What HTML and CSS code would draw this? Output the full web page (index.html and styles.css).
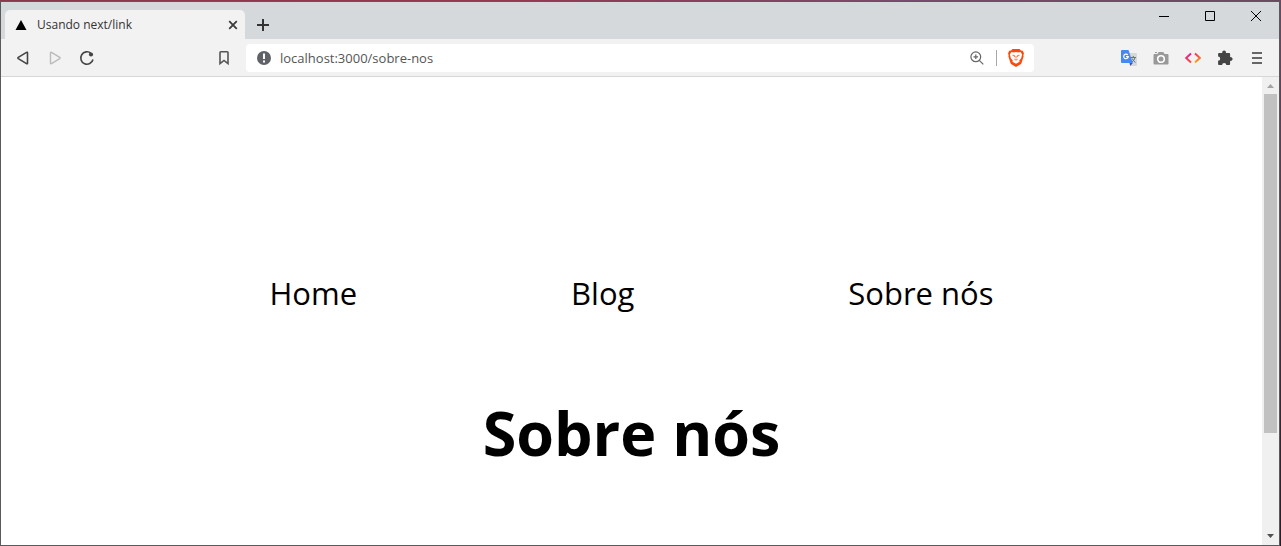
FILE: index.html
```html
<!DOCTYPE html>
<html lang="pt-BR">
<head>
    <meta charset="UTF-8">
    <meta name="viewport" content="width=device-width, initial-scale=1.0">
    <title>Usando next/link</title>
    <link rel="stylesheet" href="styles.css">
</head>
<body>
    <div class="window">
        <header class="titlebar">
            <div class="tab">
                <svg class="favicon" width="12" height="12" viewBox="0 0 12 12"><path d="M6 1l5.500 10h-11z" fill="#000"/></svg>
                <span class="tab-title">Usando next/link</span>
                <button class="tab-close" aria-label="Fechar aba">
                    <svg width="10" height="10" viewBox="0 0 10 10"><path d="M1.200 1.200l7.600 7.600M8.800 1.200l-7.600 7.600" stroke="#3c3c3c" stroke-width="1.800"/></svg>
                </button>
            </div>
            <button class="new-tab" aria-label="Nova aba">
                <svg width="12" height="12" viewBox="0 0 12 12"><path d="M6 0v12M0 6h12" stroke="#333" stroke-width="2"/></svg>
            </button>
            <div class="window-controls">
                <button aria-label="Minimizar"><svg width="10" height="10" viewBox="0 0 10 10"><path d="M0 5.500h10" stroke="#000"/></svg></button>
                <button aria-label="Maximizar"><svg width="10" height="10" viewBox="0 0 10 10"><path d="M.5 .5h9v9h-9z" fill="none" stroke="#000"/></svg></button>
                <button aria-label="Fechar"><svg width="10" height="10" viewBox="0 0 10 10"><path d="M0 0l10 10M10 0L0 10" stroke="#000"/></svg></button>
            </div>
        </header>

        <div class="toolbar">
            <div class="toolbar-side">
                <button class="tool" aria-label="Voltar">
                    <svg width="16" height="16" viewBox="0 0 16 16"><path d="M12.500 3v10q0 1.200-1 .6L3.300 8.600q-.8-.6 0-1.200l8.200-5q1-.6 1 .6z" fill="none" stroke="#444" stroke-width="1.600"/></svg>
                </button>
                <button class="tool" aria-label="Avançar" disabled>
                    <svg width="16" height="16" viewBox="0 0 16 16"><path d="M3.500 3v10q0 1.200 1 .6l8.200-5q.8-.6 0-1.200l-8.200-5q-1-.6-1 .6z" fill="none" stroke="#bbb" stroke-width="1.400"/></svg>
                </button>
                <button class="tool" aria-label="Recarregar">
                    <svg width="16" height="16" viewBox="0 0 16 16"><path d="M14 9.500A6.200 6.200 0 1 1 12 3.300" fill="none" stroke="#444" stroke-width="1.600"/><circle cx="12" cy="4.500" r="2.100" fill="#444"/></svg>
                </button>
                <button class="tool bookmark" aria-label="Favoritar">
                    <svg width="16" height="16" viewBox="0 0 16 16"><path d="M4 2.500q0-.8.800-.8h6.400q.8 0 .8.800v11.200L8 10.500l-4 3.200z" fill="none" stroke="#555" stroke-width="1.600"/></svg>
                </button>
            </div>

            <div class="address-bar">
                <svg width="14" height="14" viewBox="0 0 14 14"><circle cx="7" cy="7" r="7" fill="#5f6368"/><path d="M7 2.500v5.500M7 9.500v2" stroke="#fff" stroke-width="2"/></svg>
                <input type="text" class="address" aria-label="Endereço" value="localhost:3000/sobre-nos">
                <button class="zoom-button" aria-label="Zoom">
                    <svg width="14" height="14" viewBox="0 0 14 14"><circle cx="5.800" cy="5.800" r="4.900" fill="none" stroke="#666" stroke-width="1.200"/><path d="M9.300 9.300L13.300 13.300M5.800 3.500v4.600M3.500 5.800h4.600" stroke="#666" stroke-width="1.200"/></svg>
                </button>
                <span class="divider"></span>
                <button class="brave" aria-label="Brave Shields">
                    <svg width="16" height="18" viewBox="0 0 16 18">
                        <path d="M4.500 0h7l1.500 1.500 1.800.2 1.200 2.800-.6 1.500.2 1.500-2.100 6.500q-.4 1-1.300 1.600L8 18l-4.200-2.400q-.9-.6-1.300-1.600L.4 7.500.6 6 0 4.500l1.200-2.800 1.800-.2z" fill="#fb4a0c"/>
                        <path d="M3.500 3l2.500.6L8 3l2 .6 2.500-.6 1.600 2.200-.9 4-2 2.300.4 1.200L8 14.800l-3.600-2.100.4-1.200-2-2.300-.9-4z" fill="#fff"/>
                        <path d="M4.500 6.200l2 .4-.3 1.400M11.500 6.200l-2 .4.3 1.400M8 7v2.500M6.300 10.200l1.700.9 1.700-.9" fill="none" stroke="#fb5a24" stroke-width=".9"/>
                    </svg>
                </button>
            </div>

            <div class="toolbar-side extensions">
                <button class="tool" aria-label="Google Tradutor">
                    <svg width="16" height="16" viewBox="0 0 16 16">
                        <path d="M6 3h9q1 0 1 1v11q0 1-1 1H10z" fill="#d8d8d8"/>
                        <path d="M8.500 13h3.300l-2.600 3z" fill="#3d4db7"/>
                        <path d="M1 0h6.500l4.300 13H1q-1 0-1-1V1q0-1 1-1z" fill="#4688f1"/>
                        <path d="M6.800 5A2.300 2.300 0 1 0 7.300 6.600H5" fill="none" stroke="#fff" stroke-width="1.200"/>
                        <path d="M10 7.500h5M12.300 6v1.500M14 7.500q-.5 3-3 4.500M11.200 8.500q1 2.500 3.300 4" fill="none" stroke="#607988"/>
                    </svg>
                </button>
                <button class="tool" aria-label="Captura de tela">
                    <svg width="16" height="16" viewBox="0 0 16 16"><path d="M1.500 4h3L5.700 2h4.600l1.200 2h3q1 0 1 1v8.500q0 1-1 1h-13q-1 0-1-1V5q0-1 1-1z" fill="#999"/><circle cx="8" cy="9" r="3.300" fill="#999" stroke="#fff" stroke-width="1.600"/><path d="M2 2.500h2" stroke="#999"/></svg>
                </button>
                <button class="tool" aria-label="Código">
                    <svg width="16" height="16" viewBox="0 0 16 16">
                        <defs>
                            <linearGradient id="pink" x2="0" y2="1"><stop stop-color="#e5199a"/><stop offset="1" stop-color="#fb4b3d"/></linearGradient>
                            <linearGradient id="orange" x2="0" y2="1"><stop stop-color="#f8314e"/><stop offset="1" stop-color="#fba51a"/></linearGradient>
                        </defs>
                        <path d="M6 3.500L1.200 8 6 12.500" fill="none" stroke="url(#pink)" stroke-width="1.900"/>
                        <path d="M10 3.500L14.800 8 10 12.500" fill="none" stroke="url(#orange)" stroke-width="1.900"/>
                    </svg>
                </button>
                <button class="tool" aria-label="Extensões">
                    <svg width="16" height="16" viewBox="0 0 16 16"><path d="M2 3h3.300a1.900 1.900 0 1 1 3.600 0h3.300q.9 0 .9.900v3.300a1.900 1.900 0 1 1 0 3.600v3.300q0 .9-.9.900H9.300a2.100 2.100 0 1 0-4.200 0H2q-.9 0-.9-.9v-3.300a2.100 2.100 0 1 0 0-4.200V3.900q0-.9.900-.9z" fill="#444"/></svg>
                </button>
                <button class="tool" aria-label="Menu">
                    <svg width="16" height="16" viewBox="0 0 16 16"><path d="M3 3h10M3 8h10M3 13h10" stroke="#666" stroke-width="2"/></svg>
                </button>
            </div>
        </div>

        <div class="viewport">
            <main class="page">
                <nav class="menu">
                    <a href="#home">Home</a>
                    <a href="#blog">Blog</a>
                    <a href="#sobre-nos">Sobre nós</a>
                </nav>
                <h1>Sobre nós</h1>
            </main>
            <div class="scrollbar">
                <svg class="scroll-arrow" width="7" height="4" viewBox="0 0 7 4"><path d="M3.500 0L7 4H0z" fill="#a3a3a3"/></svg>
                <div class="scroll-track"><div class="scroll-thumb"></div></div>
                <svg class="scroll-arrow" width="7" height="4" viewBox="0 0 7 4"><path d="M3.500 4L7 0H0z" fill="#505050"/></svg>
            </div>
        </div>
    </div>
</body>
</html>
```
FILE: styles.css
```css
* {
    box-sizing: border-box;
}
body {
    display: flex;
    height: 100vh;
    margin: 0;
    padding: 1px 1px 0 0;
    background:
        linear-gradient(90deg, #8a3a48, #93394e 40%, #7a4a70 70%, #6a4a62) top / 100% 1px no-repeat,
        linear-gradient(#6a4a62, #2c1a26);
    font-family: 'Open Sans', 'Noto Sans', sans-serif;
}
button {
    display: flex;
    align-items: center;
    justify-content: center;
    padding: 0;
    border: 0;
    background: none;
}
svg {
    flex: none;
}
.window {
    display: flex;
    flex: 1;
    flex-direction: column;
    border: 1px solid #5a5a5c;
    background: #fff;
}

/* title bar */
.titlebar {
    display: flex;
    align-items: flex-end;
    height: 37px;
    padding-left: 4px;
    background: #d5d9dc;
}
.tab {
    display: flex;
    align-items: center;
    width: 240px;
    height: 29px;
    padding: 0 6px 0 10px;
    border-radius: 5px 5px 0 0;
    background: #f2f2f2;
}
.tab-title {
    flex: 1;
    margin-left: 10px;
    color: #333;
    font-size: 12px;
}
.tab-close {
    width: 12px;
    height: 16px;
}
.new-tab {
    width: 36px;
    height: 28px;
}
.window-controls {
    display: flex;
    align-self: flex-start;
    margin-left: auto;
}
.window-controls button {
    width: 46px;
    height: 28px;
}

/* toolbar */
.toolbar {
    display: flex;
    align-items: center;
    height: 38px;
    border-bottom: 1px solid #d6d6d6;
    background: #f2f2f2;
}
.toolbar-side {
    display: flex;
    width: 245px;
    padding: 0 6px;
}
.tool {
    width: 32px;
    height: 28px;
}
.bookmark {
    margin-left: auto;
}
.extensions {
    justify-content: flex-end;
}
.address-bar {
    display: flex;
    flex: 1;
    align-items: center;
    height: 28px;
    padding: 0 10px 0 11px;
    border-radius: 4px;
    background: #fff;
}
.address {
    flex: 1;
    padding: 0 9px;
    border: 0;
    outline: 0;
    background: none;
    color: #555;
    font: 13px 'Open Sans', 'Noto Sans', sans-serif;
}
.zoom-button {
    width: 16px;
}
.divider {
    width: 1px;
    height: 16px;
    margin: 0 11px;
    background: #a8a8a8;
}

/* page */
.viewport {
    display: flex;
    flex: 1;
}
.page {
    flex: 1;
    padding: 192px 16px 0;
    text-align: center;
}
.menu {
    display: flex;
    justify-content: space-between;
    max-width: 724px;
    margin: 0 auto;
    font-size: 31px;
    line-height: 48px;
}
.menu a {
    color: #000;
    text-decoration: none;
}
h1 {
    margin: 68px 0 0;
    font-size: 61px;
    line-height: 96px;
}
.scrollbar {
    display: flex;
    flex-direction: column;
    align-items: center;
    width: 17px;
    padding: 7px 0;
    background: #f0f0f0;
}
.scroll-track {
    flex: 1;
    margin: 6px 0;
}
.scroll-thumb {
    width: 13px;
    height: 78%;
    background: #c1c1c1;
}
```
